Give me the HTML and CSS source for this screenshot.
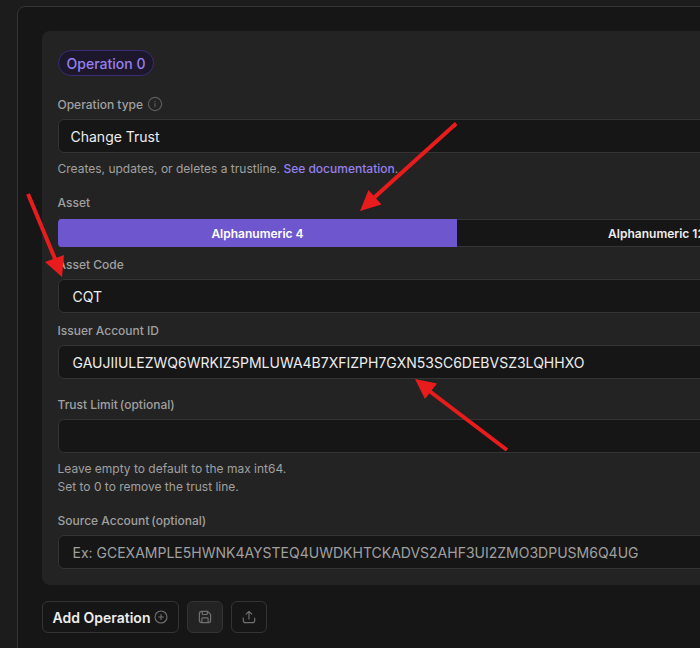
FILE: index.html
```html
<!DOCTYPE html>
<html lang="en">
<head>
<meta charset="utf-8">
<title>Build Transaction</title>
<link rel="stylesheet" href="styles.css">
</head>
<body>
<main class="panel">
  <section class="card">
    <div class="badge">Operation 0</div>

    <div class="field field-type">
      <div class="label">Operation type
        <svg class="info" viewBox="0 0 16 16"><circle cx="8" cy="8" r="6.6"/><path d="M8 7.6v3M8 5.3v.5"/></svg>
      </div>
      <div class="input select">Change Trust</div>
      <div class="note">Creates, updates, or deletes a trustline. <a class="link">See documentation</a>.</div>
    </div>

    <div class="field field-asset">
      <div class="label">Asset</div>
      <div class="toggle">
        <div class="option active">Alphanumeric 4</div>
        <div class="option">Alphanumeric 12</div>
      </div>
    </div>

    <div class="field field-code">
      <div class="label">Asset Code</div>
      <div class="input">CQT</div>
    </div>

    <div class="field field-issuer">
      <div class="label">Issuer Account ID</div>
      <div class="input key">GAUJIIULEZWQ6WRKIZ5PMLUWA4B7XFIZPH7GXN53SC6DEBVSZ3LQHHXO</div>
    </div>

    <div class="field field-limit">
      <div class="label">Trust Limit <span class="optional">(optional)</span></div>
      <div class="input"></div>
      <div class="note">Leave empty to default to the max int64.<br>Set to 0 to remove the trust line.</div>
    </div>

    <div class="field field-source">
      <div class="label">Source Account <span class="optional">(optional)</span></div>
      <div class="input placeholder">Ex: GCEXAMPLE5HWNK4AYSTEQ4UWDKHTCKADVS2AHF3UI2ZMO3DPUSM6Q4UG</div>
    </div>
  </section>

  <div class="actions">
    <div class="button add"><span class="add-text">Add Operation</span>
      <svg class="plus" viewBox="0 0 14 14"><circle cx="7" cy="7" r="6"/><path d="M7 4.6v4.8M4.6 7h4.8"/></svg>
    </div>
    <div class="button icon-button filled">
      <svg class="icon" viewBox="0 0 14 14"><path d="M1.400 3.400a2 2 0 0 1 2-2h6.200l3 3v6.200a2 2 0 0 1-2 2H3.400a2 2 0 0 1-2-2zM4.200 1.600v2.200q0 .7.700.7h3.700q.7 0 .7-.7V1.600M3.900 12.400V8.700q0-.9.900-.9h4.400q.9 0 .9.900v3.700"/></svg>
    </div>
    <div class="button icon-button">
      <svg class="icon" viewBox="0 0 14 14"><path d="M1.300 8.200v2.200a2.200 2.200 0 0 0 2.200 2.200h7a2.200 2.200 0 0 0 2.200-2.200V8.200M7 9V1.400M4.200 4.100 7 1.300l2.800 2.800"/></svg>
    </div>
  </div>
</main>

<svg class="arrows" viewBox="0 0 700 648">
  <path class="shaft" d="M456.200 123.500 372 199.500M28 194 55.500 260M507 450 428 390"/>
  <path class="head" d="M360 211 368.500 190 381.500 204.500ZM62 277 45 262 64 255ZM415 379 437 383.500 425 399Z"/>
</svg>
</body>
</html>
```

FILE: styles.css
```css
* {
  box-sizing: border-box;
}

html {
  overflow: hidden;
}

body {
  margin: 0;
  height: 648px;
  overflow: hidden;
  background: #1c1c1c;
  color: #ededed;
  font-family: Inter, "Liberation Sans", sans-serif;
  font-size: 14px;
}

svg {
  fill: none;
  stroke-linecap: round;
  stroke-linejoin: round;
}

.panel {
  width: 880px;
  height: 700px;
  margin: 6px 0 0 17px;
  padding: 24px;
  border: 1px solid #343434;
  border-radius: 8px;
  background: #161616;
}

.card {
  height: 554px;
  padding: 19px 16px 16px;
  border-radius: 8px;
  background: #232323;
}

.badge {
  display: flex;
  align-items: center;
  justify-content: center;
  width: 96px;
  height: 26px;
  border: 1px solid #392c72;
  border-radius: 13px;
  background: #1d172b;
  color: #9680ed;
  font-size: 14px;
  font-weight: 500;
}

.label {
  display: flex;
  align-items: center;
  gap: 2px;
  height: 18px;
  margin-bottom: 6px;
  margin-left: -0.5px;
  color: #a0a0a0;
  font-size: 12px;
  font-weight: 500;
}

.info {
  width: 16px;
  height: 16px;
  margin-left: 2px;
  stroke: #5c5c5c;
  stroke-width: 1.2;
}

.input {
  display: flex;
  align-items: center;
  height: 34px;
  padding: 0 13.5px;
  border: 1px solid #343434;
  border-radius: 6px;
  background: #161616;
  font-size: 14px;
}

.select {
  padding-left: 11.5px;
}

.placeholder {
  color: #a0a0a0;
}

.note {
  margin-top: 7px;
  margin-left: -0.5px;
  color: #a0a0a0;
  font-size: 12px;
  line-height: 18px;
}

.link {
  color: #9680ed;
  font-weight: 500;
}

.field-type {
  margin-top: 19px;
}

.field-asset {
  margin-top: 15px;
}

.field-asset .label {
  margin-bottom: 8px;
}

.toggle {
  display: flex;
  height: 28px;
  overflow: hidden;
  border-radius: 4px;
}

.option {
  display: flex;
  flex: 1;
  align-items: center;
  justify-content: center;
  padding-top: 1px;
  border: solid #343434;
  border-width: 1px 0;
  background: #161616;
  font-size: 12px;
  font-weight: 600;
}

.option.active {
  border-color: #6e56cf;
  background: #6e56cf;
  color: #fff;
}

.field-code,
.field-issuer {
  margin-top: 8px;
}

.field-limit {
  margin-top: 16px;
}

.field-source {
  margin-top: 15px;
}

.actions {
  display: flex;
  gap: 8px;
  margin-top: 16px;
}

.button {
  display: flex;
  align-items: center;
  justify-content: center;
  height: 32px;
  border: 1px solid #343434;
  border-radius: 6px;
}

.add {
  gap: 4px;
  width: 137px;
  font-size: 14px;
  font-weight: 600;
}

.plus {
  width: 14px;
  height: 14px;
  stroke: #707070;
  stroke-width: 1.1;
}

.icon-button {
  width: 36px;
}

.filled {
  background: #232323;
}

.icon {
  width: 14px;
  height: 14px;
  stroke: #707070;
  stroke-width: 1.2;
}

.arrows {
  position: absolute;
  top: 0;
  left: 0;
  width: 700px;
  height: 648px;
}

.shaft {
  stroke: #e81c1c;
  stroke-width: 4;
  stroke-linecap: butt;
}

.head {
  fill: #e81c1c;
}
```
